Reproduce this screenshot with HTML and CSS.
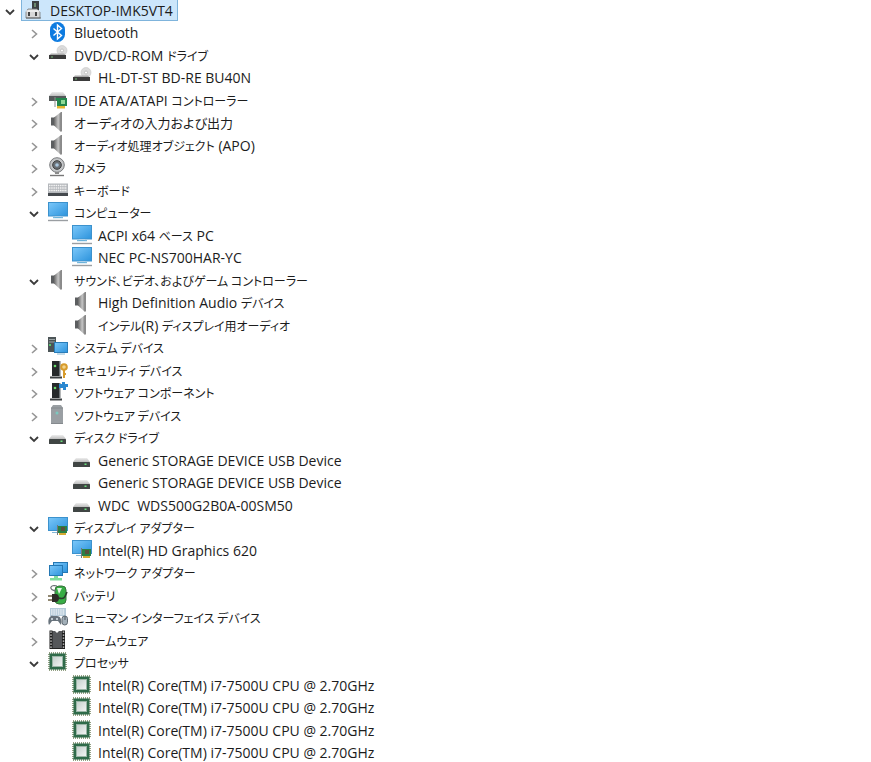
FILE: index.html
```html
<!DOCTYPE html>
<html lang="ja">
  <head>
    <meta charset="utf-8">
    <meta name="viewport" content="width=device-width, initial-scale=1.0">
    <title>デバイス マネージャー</title>
    <link rel="stylesheet" href="styles.css">
  </head>
  <body>
    <svg class="sprite" aria-hidden="true">
      <defs>
        <linearGradient id="g-screen" x1="0" y1="0" x2="1" y2="1">
          <stop offset="0" stop-color="#7cc8fa"/>
          <stop offset="1" stop-color="#2c93dc"/>
        </linearGradient>
        <linearGradient id="g-speaker" x1="0" y1="0" x2="1" y2="0">
          <stop offset="0" stop-color="#666"/>
          <stop offset=".6" stop-color="#c6c6c6"/>
          <stop offset="1" stop-color="#808080"/>
        </linearGradient>
        <linearGradient id="g-lid" x1="0" y1="0" x2="0" y2="1">
          <stop offset="0" stop-color="#eee"/>
          <stop offset="1" stop-color="#bcbcbc"/>
        </linearGradient>
        <linearGradient id="g-die" x1="0" y1="0" x2="1" y2="1">
          <stop offset="0" stop-color="#c3cfcb"/>
          <stop offset="1" stop-color="#f4f6f5"/>
        </linearGradient>
      </defs>
      <symbol id="i-open" viewBox="0 0 20 20">
        <path d="M6 9l4 4 4-4" fill="none" stroke="#3b3b3b" stroke-width="1.8"/>
      </symbol>
      <symbol id="i-closed" viewBox="0 0 20 20">
        <path d="M8 7l4.500 4-4.500 4" fill="none" stroke="#969696" stroke-width="1.600"/>
      </symbol>
      <symbol id="i-root" viewBox="0 0 20 20">
        <rect x="8" y="1" width="7" height="9" fill="#3c4043"/>
        <rect x="10" y="3" width="2" height="4" fill="#6b8a70"/>
        <path d="M4 9h9l3 3v6H2v-6z" fill="#d8d8d8" stroke="#77797b" stroke-width=".8"/>
        <path d="M2 11h14" stroke="#fff"/>
        <rect x="4" y="12" width="2" height="4" fill="#444"/>
        <rect x="11" y="12" width="2" height="4" fill="#444"/>
        <path d="M2 18h15" stroke="#666"/>
      </symbol>
      <symbol id="i-bluetooth" viewBox="0 0 20 20">
        <rect x="2" y="0" width="15" height="20" rx="7.500" fill="#0d7be0"/>
        <path d="M5.500 6.500l8 7-4 3.500V3l4 3.500-8 7" fill="none" stroke="#fff" stroke-width="1.400"/>
      </symbol>
      <symbol id="i-optical" viewBox="0 0 20 20">
        <circle cx="14" cy="5.500" r="5" fill="#dcdcdc" stroke="#c8c8c8" stroke-width=".6"/>
        <circle cx="14" cy="5.500" r="1.500" fill="#fff" stroke="#aaa" stroke-width=".6"/>
        <path d="M3 8.500h13l2 2H1z" fill="#aaa"/>
        <rect x="1" y="10" width="17" height="4" fill="#3b3b3b"/>
        <rect x="3" y="11.500" width="2" height="1" fill="#74b878"/>
      </symbol>
      <symbol id="i-ide" viewBox="0 0 20 20">
        <path d="M4 2h11l3 4H1z" fill="url(#g-lid)"/>
        <rect x="1" y="6" width="17" height="5" fill="#55595a"/>
        <path d="M7 8h12v8H9v-6H7z" fill="#23874c"/>
        <path d="M7 7v10" stroke="#8b8b8b"/>
        <rect x="13" y="10" width="4" height="4" fill="#8edb96"/>
        <path d="M9 16h8v2.500H9z" fill="#e3b630"/>
      </symbol>
      <symbol id="i-speaker" viewBox="0 0 20 20">
        <path d="M3 5.500h4v8H3z" fill="#5c5e60"/>
        <path d="M6 5.500L13 0v20l-7-6.500z" fill="url(#g-speaker)"/>
        <path d="M13.500 0v19.500" stroke="#8a8a8a"/>
      </symbol>
      <symbol id="i-camera" viewBox="0 0 20 20">
        <circle cx="9" cy="8" r="7.300" fill="#c4c6c8" stroke="#7a7c7e"/>
        <circle cx="9" cy="8" r="4.300" fill="#6b7075" stroke="#3c3c3c"/>
        <circle cx="9" cy="8" r="1.800" fill="#a9c6de"/>
        <path d="M7 15h4v2H7z" fill="#8a8a8a"/>
        <path d="M2 18.500h14" stroke="#777" stroke-width="1.400"/>
      </symbol>
      <symbol id="i-keyboard" viewBox="0 0 20 20">
        <rect x="0" y="3.500" width="20" height="10" fill="#b4b7bb"/>
        <path d="M1 5.500h18M1 8h18M1 10.500h18" stroke="#f4f4f4" stroke-width="1.400" stroke-dasharray="1.500 .7"/>
        <rect x="0" y="13" width="20" height="3" fill="#45494e"/>
      </symbol>
      <symbol id="i-monitor" viewBox="0 0 20 20">
        <rect x=".5" y=".5" width="19" height="13.500" fill="url(#g-screen)" stroke="#3c92cd"/>
        <path d="M7 14.500h6v1.500H7z" fill="#bcd9ec"/>
        <path d="M5 15.700h10" stroke="#59a9d6"/>
        <path d="M0 18.500h20" stroke="#9a9ea2" stroke-width="1.400"/>
      </symbol>
      <symbol id="i-system" viewBox="0 0 20 20">
        <rect x="0" y="0" width="8" height="15" fill="#4c5557"/>
        <path d="M1 2.500h6M1 5h6" stroke="#9aa3a5"/>
        <rect x="1" y="7" width="2" height="2" fill="#57c46d"/>
        <rect x="6.500" y="5.500" width="13" height="10" fill="url(#g-screen)" stroke="#2a7db8"/>
        <path d="M9 17h8" stroke="#8ab7d2"/>
      </symbol>
      <symbol id="i-tower" viewBox="0 0 20 20">
        <path d="M4 1h8v15H4z" fill="#26292b"/>
        <path d="M11 1h1.500v15H11z" fill="#6b7073"/>
        <path d="M2 17.500h12" stroke="#3b3f41" stroke-width="2"/>
        <circle cx="7" cy="6" r="1.300" fill="#68dc6c"/>
      </symbol>
      <symbol id="i-security" viewBox="0 0 20 20">
        <use href="#i-tower" width="20" height="20"/>
        <circle cx="16" cy="7" r="2.800" fill="#f3d38a" stroke="#d79b2c" stroke-width="2"/>
        <path d="M16 10v8M16 14h2" stroke="#d79b2c" stroke-width="2"/>
      </symbol>
      <symbol id="i-component" viewBox="0 0 20 20">
        <use href="#i-tower" width="20" height="20"/>
        <path d="M11 2h3V0h3v2h3v3h-2v3h-3V6h-4z" fill="#2b88d0"/>
      </symbol>
      <symbol id="i-software" viewBox="0 0 20 20">
        <path d="M5 0h8l2 3v16H3V3z" fill="#9a9fa3"/>
        <path d="M3 3h12M3 18.500h12" stroke="#858a8e"/>
        <circle cx="9" cy="8" r="1.500" fill="#7cc9c0"/>
      </symbol>
      <symbol id="i-disk" viewBox="0 0 20 20">
        <path d="M4 8h11l3 4H1z" fill="url(#g-lid)"/>
        <rect x="1" y="12" width="17" height="5" rx=".5" fill="#404544"/>
        <rect x="12.500" y="13.500" width="2" height="1.500" fill="#69df7a"/>
      </symbol>
      <symbol id="i-display" viewBox="0 0 20 20">
        <rect x=".5" y=".5" width="19" height="13" fill="url(#g-screen)" stroke="#3c92cd"/>
        <path d="M4 15.500h6" stroke="#84b8d7"/>
        <path d="M9.500 8v10" stroke="#777"/>
        <path d="M10 9h9v7h-9z" fill="#2a8045"/>
        <rect x="13" y="10" width="4" height="4" fill="#59503c"/>
        <path d="M11 17h7" stroke="#d6ab32" stroke-width="2"/>
      </symbol>
      <symbol id="i-network" viewBox="0 0 20 20">
        <rect x="5.500" y=".5" width="14" height="10" fill="url(#g-screen)" stroke="#2478b4"/>
        <rect x="1.500" y="3.500" width="13" height="10" fill="url(#g-screen)" stroke="#2478b4"/>
        <path d="M6 14h4v2h4v2.500H2V16h4z" fill="#7fdc9c"/>
      </symbol>
      <symbol id="i-battery" viewBox="0 0 20 20">
        <rect x="7" y="1" width="11" height="18" rx="4" fill="#37ad45" stroke="#37713b"/>
        <path d="M9 3h5l-3 6z" fill="#dff5df"/>
        <path d="M8 6C0 5 2-1 9 1" fill="none" stroke="#6b7376" stroke-width="1.200"/>
        <path d="M0 11h4M0 15h4" stroke="#6e6144" stroke-width="1.400"/>
        <path d="M4 9h4c4 0 4 8 0 8H4z" fill="#2f2d29"/>
        <path d="M11 13c6 2 6-2 8-6" fill="none" stroke="#293d2c" stroke-width="1.600"/>
      </symbol>
      <symbol id="i-hid" viewBox="0 0 20 20">
        <rect x="2" y="1" width="16" height="8" fill="#b4cad9"/>
        <path d="M3 3h14M3 5h14M3 7h14" stroke="#fff" stroke-dasharray="1.500 .8"/>
        <path d="M1 18c-2-5 1-10 4-9h4c4 0 5 5 4 9l-3-4H4z" fill="#68737c"/>
        <circle cx="4" cy="12" r="1" fill="#dce7ee"/>
        <circle cx="9" cy="12" r="1" fill="#dce7ee"/>
        <rect x="14" y="9" width="5.500" height="9" rx="2.700" fill="#a2afb8" stroke="#5e6870"/>
        <path d="M17 9v4" stroke="#4f5860"/>
      </symbol>
      <symbol id="i-firmware" viewBox="0 0 20 20">
        <path d="M3 1h4l2 2 2-2h4v17H3z" fill="#55575a"/>
        <path d="M3 .5v18.500M15.500 .5v18.500" stroke="#1d1d1d" stroke-width="3"/>
        <path d="M3 1.500v17M15.500 1.500v17" stroke="#d8d8d8" stroke-width="1.500" stroke-dasharray="1.300 1.700"/>
        <path d="M3 18.500h12" stroke="#222"/>
      </symbol>
      <symbol id="i-cpu" viewBox="0 0 20 20">
        <rect x="1" y="1" width="17" height="17" fill="none" stroke="#71835c" stroke-width="1.500" stroke-dasharray="1 1"/>
        <rect x="1.500" y="1.500" width="16" height="16" fill="#2f6b4a"/>
        <rect x="4.500" y="4.500" width="10" height="10" fill="url(#g-die)" stroke="#9ab5a6"/>
      </symbol>
    </svg>

    <ul class="tree" role="tree" aria-label="デバイス">
      <li class="row" role="treeitem" aria-level="1" aria-expanded="true" aria-selected="true"><button class="toggle" aria-label="折りたたむ"><svg><use href="#i-open"/></svg></button><span class="item selected"><svg><use href="#i-root"/></svg><span>DESKTOP-IMK5VT4</span></span></li>
      <li class="row child" role="treeitem" aria-level="2" aria-expanded="false"><button class="toggle" aria-label="展開"><svg><use href="#i-closed"/></svg></button><span class="item"><svg><use href="#i-bluetooth"/></svg><span>Bluetooth</span></span></li>
      <li class="row child" role="treeitem" aria-level="2" aria-expanded="true"><button class="toggle" aria-label="折りたたむ"><svg><use href="#i-open"/></svg></button><span class="item"><svg><use href="#i-optical"/></svg><span>DVD/CD-ROM <span class="ja">ドライブ</span></span></span></li>
      <li class="row leaf" role="treeitem" aria-level="3"><span class="item"><svg><use href="#i-optical"/></svg><span>HL-DT-ST BD-RE BU40N</span></span></li>
      <li class="row child" role="treeitem" aria-level="2" aria-expanded="false"><button class="toggle" aria-label="展開"><svg><use href="#i-closed"/></svg></button><span class="item"><svg><use href="#i-ide"/></svg><span>IDE ATA/ATAPI <span class="ja">コントローラー</span></span></span></li>
      <li class="row child" role="treeitem" aria-level="2" aria-expanded="false"><button class="toggle" aria-label="展開"><svg><use href="#i-closed"/></svg></button><span class="item"><svg><use href="#i-speaker"/></svg><span class="ja kanji">オーディオの入力および出力</span></span></li>
      <li class="row child" role="treeitem" aria-level="2" aria-expanded="false"><button class="toggle" aria-label="展開"><svg><use href="#i-closed"/></svg></button><span class="item"><svg><use href="#i-speaker"/></svg><span><span class="ja">オーディオ処理オブジェクト</span> (APO)</span></span></li>
      <li class="row child" role="treeitem" aria-level="2" aria-expanded="false"><button class="toggle" aria-label="展開"><svg><use href="#i-closed"/></svg></button><span class="item"><svg><use href="#i-camera"/></svg><span class="ja">カメラ</span></span></li>
      <li class="row child" role="treeitem" aria-level="2" aria-expanded="false"><button class="toggle" aria-label="展開"><svg><use href="#i-closed"/></svg></button><span class="item"><svg><use href="#i-keyboard"/></svg><span class="ja">キーボード</span></span></li>
      <li class="row child" role="treeitem" aria-level="2" aria-expanded="true"><button class="toggle" aria-label="折りたたむ"><svg><use href="#i-open"/></svg></button><span class="item"><svg><use href="#i-monitor"/></svg><span class="ja">コンピューター</span></span></li>
      <li class="row leaf" role="treeitem" aria-level="3"><span class="item"><svg><use href="#i-monitor"/></svg><span>ACPI x64 <span class="ja">ベース</span> PC</span></span></li>
      <li class="row leaf" role="treeitem" aria-level="3"><span class="item"><svg><use href="#i-monitor"/></svg><span>NEC PC-NS700HAR-YC</span></span></li>
      <li class="row child" role="treeitem" aria-level="2" aria-expanded="true"><button class="toggle" aria-label="折りたたむ"><svg><use href="#i-open"/></svg></button><span class="item"><svg><use href="#i-speaker"/></svg><span class="ja">サウンド、ビデオ、およびゲーム コントローラー</span></span></li>
      <li class="row leaf" role="treeitem" aria-level="3"><span class="item"><svg><use href="#i-speaker"/></svg><span>High Definition Audio <span class="ja">デバイス</span></span></span></li>
      <li class="row leaf" role="treeitem" aria-level="3"><span class="item"><svg><use href="#i-speaker"/></svg><span><span class="ja">インテル</span>(R) <span class="ja">ディスプレイ用オーディオ</span></span></span></li>
      <li class="row child" role="treeitem" aria-level="2" aria-expanded="false"><button class="toggle" aria-label="展開"><svg><use href="#i-closed"/></svg></button><span class="item"><svg><use href="#i-system"/></svg><span class="ja">システム デバイス</span></span></li>
      <li class="row child" role="treeitem" aria-level="2" aria-expanded="false"><button class="toggle" aria-label="展開"><svg><use href="#i-closed"/></svg></button><span class="item"><svg><use href="#i-security"/></svg><span class="ja">セキュリティ デバイス</span></span></li>
      <li class="row child" role="treeitem" aria-level="2" aria-expanded="false"><button class="toggle" aria-label="展開"><svg><use href="#i-closed"/></svg></button><span class="item"><svg><use href="#i-component"/></svg><span class="ja">ソフトウェア コンポーネント</span></span></li>
      <li class="row child" role="treeitem" aria-level="2" aria-expanded="false"><button class="toggle" aria-label="展開"><svg><use href="#i-closed"/></svg></button><span class="item"><svg><use href="#i-software"/></svg><span class="ja">ソフトウェア デバイス</span></span></li>
      <li class="row child" role="treeitem" aria-level="2" aria-expanded="true"><button class="toggle" aria-label="折りたたむ"><svg><use href="#i-open"/></svg></button><span class="item"><svg><use href="#i-disk"/></svg><span class="ja">ディスク ドライブ</span></span></li>
      <li class="row leaf" role="treeitem" aria-level="3"><span class="item"><svg><use href="#i-disk"/></svg><span>Generic STORAGE DEVICE USB Device</span></span></li>
      <li class="row leaf" role="treeitem" aria-level="3"><span class="item"><svg><use href="#i-disk"/></svg><span>Generic STORAGE DEVICE USB Device</span></span></li>
      <li class="row leaf" role="treeitem" aria-level="3"><span class="item"><svg><use href="#i-disk"/></svg><span>WDC&nbsp; WDS500G2B0A-00SM50</span></span></li>
      <li class="row child" role="treeitem" aria-level="2" aria-expanded="true"><button class="toggle" aria-label="折りたたむ"><svg><use href="#i-open"/></svg></button><span class="item"><svg><use href="#i-display"/></svg><span class="ja">ディスプレイ アダプター</span></span></li>
      <li class="row leaf" role="treeitem" aria-level="3"><span class="item"><svg><use href="#i-display"/></svg><span>Intel(R) HD Graphics 620</span></span></li>
      <li class="row child" role="treeitem" aria-level="2" aria-expanded="false"><button class="toggle" aria-label="展開"><svg><use href="#i-closed"/></svg></button><span class="item"><svg><use href="#i-network"/></svg><span class="ja">ネットワーク アダプター</span></span></li>
      <li class="row child" role="treeitem" aria-level="2" aria-expanded="false"><button class="toggle" aria-label="展開"><svg><use href="#i-closed"/></svg></button><span class="item"><svg><use href="#i-battery"/></svg><span class="ja">バッテリ</span></span></li>
      <li class="row child" role="treeitem" aria-level="2" aria-expanded="false"><button class="toggle" aria-label="展開"><svg><use href="#i-closed"/></svg></button><span class="item"><svg><use href="#i-hid"/></svg><span class="ja">ヒューマン インターフェイス デバイス</span></span></li>
      <li class="row child" role="treeitem" aria-level="2" aria-expanded="false"><button class="toggle" aria-label="展開"><svg><use href="#i-closed"/></svg></button><span class="item"><svg><use href="#i-firmware"/></svg><span class="ja">ファームウェア</span></span></li>
      <li class="row child" role="treeitem" aria-level="2" aria-expanded="true"><button class="toggle" aria-label="折りたたむ"><svg><use href="#i-open"/></svg></button><span class="item"><svg><use href="#i-cpu"/></svg><span class="ja">プロセッサ</span></span></li>
      <li class="row leaf" role="treeitem" aria-level="3"><span class="item"><svg><use href="#i-cpu"/></svg><span>Intel(R) Core(TM) i7-7500U CPU @ 2.70GHz</span></span></li>
      <li class="row leaf" role="treeitem" aria-level="3"><span class="item"><svg><use href="#i-cpu"/></svg><span>Intel(R) Core(TM) i7-7500U CPU @ 2.70GHz</span></span></li>
      <li class="row leaf" role="treeitem" aria-level="3"><span class="item"><svg><use href="#i-cpu"/></svg><span>Intel(R) Core(TM) i7-7500U CPU @ 2.70GHz</span></span></li>
      <li class="row leaf" role="treeitem" aria-level="3"><span class="item"><svg><use href="#i-cpu"/></svg><span>Intel(R) Core(TM) i7-7500U CPU @ 2.70GHz</span></span></li>
    </ul>
  </body>
</html>
```

FILE: styles.css
```css
* {
  box-sizing: border-box;
}
body {
  margin: 0;
  background-color: #fff;
  color: #1c1c1c;
  font-family: "Open Sans", "Noto Sans CJK JP", sans-serif;
  font-size: 14px;
  line-height: 22px;
}
svg {
  display: block;
  flex: none;
  width: 20px;
  height: 20px;
}
/* gradients are lost with display: none, so only collapse it */
.sprite {
  position: absolute;
  width: 0;
  height: 0;
}
.tree {
  height: 100vh;
  margin: 0;
  padding: 0;
  overflow: hidden;
  list-style: none;
}
.row {
  display: flex;
  align-items: flex-start;
  height: 22px;
  white-space: nowrap;
}
.row:nth-child(even) {
  height: 23px;
}
.child {
  padding-left: 24px;
}
.leaf {
  padding-left: 69px;
}
.toggle {
  flex: none;
  width: 21px;
  height: 21px;
  padding: 0;
  border: 0;
  background: none;
}
.item {
  display: flex;
  align-items: flex-start;
  gap: 6px;
  height: 21px;
  padding: 0 4px 0 2px;
  border: 1px solid transparent;
  border-top: 0;
}
.selected {
  background-color: #cce6fb;
  border-color: #7fb4dc;
}
.ja {
  font-family: "Noto Sans CJK JP", sans-serif;
  font-size: 12px;
  font-feature-settings: "palt";
}
.kanji {
  font-size: 13px;
}
```
